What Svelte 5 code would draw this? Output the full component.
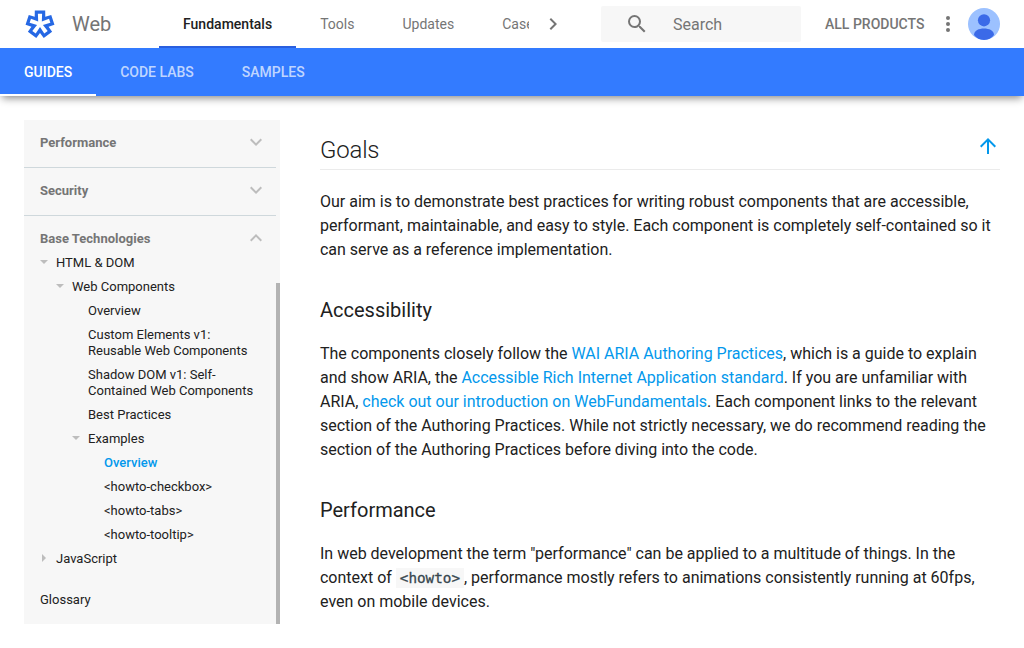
<script>
  const topTabs = ['Fundamentals', 'Tools', 'Updates', 'Case Studies'];
  const subTabs = ['GUIDES', 'CODE LABS', 'SAMPLES'];
  const tree = [
    { text: 'HTML & DOM', level: 1, arrow: 'down' },
    { text: 'Web Components', level: 2, arrow: 'down' },
    { text: 'Overview', level: 3 },
    { text: 'Custom Elements v1: Reusable Web Components', level: 3 },
    { text: 'Shadow DOM v1: Self-Contained Web Components', level: 3 },
    { text: 'Best Practices', level: 3 },
    { text: 'Examples', level: 3, arrow: 'down' },
    { text: 'Overview', level: 4, active: true },
    { text: '<howto-checkbox>', level: 4 },
    { text: '<howto-tabs>', level: 4 },
    { text: '<howto-tooltip>', level: 4 },
    { text: 'JavaScript', level: 1, arrow: 'right' }
  ];

  // Five-armed star, one arm every 72 degrees.
  function star(half, reach, notch) {
    const points = [];
    const b = (36 * Math.PI) / 180;
    for (let i = 0; i < 5; i++) {
      const a = (i * 72 * Math.PI) / 180;
      const rot = (x, y) =>
        `${(x * Math.cos(a) - y * Math.sin(a)).toFixed(2)},${(x * Math.sin(a) + y * Math.cos(a)).toFixed(2)}`;
      points.push(rot(-half, -reach), rot(half, -reach));
      points.push(rot(notch * Math.sin(b), -notch * Math.cos(b)));
    }
    return points.join(' ');
  }
</script>

<header>
  <div class="top">
    <svg class="logo" width="32" height="32" viewBox="-16 -16 32 32">
      <polygon points={star(5.2, 13.5, 9)} fill="#2668e4" />
      <polygon points={star(2.1, 10.2, 3.1)} fill="#fff" />
    </svg>
    <span class="brand">Web</span>
    <nav class="tabs">
      {#each topTabs as tab, i}
        <a class:on={i === 0}>{tab}</a>
      {/each}
    </nav>
    <svg class="next" width="24" height="24" viewBox="0 0 24 24"><path fill="#757575" d="M10 6 8.590 7.410 13.170 12l-4.580 4.590L10 18l6-6z" /></svg>
    <div class="search">
      <svg width="24" height="24" viewBox="0 0 24 24"><path fill="#757575" d="M15.500 14h-.79l-.28-.27A6.471 6.471 0 0 0 16 9.500 6.500 6.500 0 1 0 9.500 16c1.610 0 3.090-.59 4.230-1.570l.27.28v.79l5 4.990L20.490 19l-4.990-5zm-6 0C7.010 14 5 11.990 5 9.500S7.010 5 9.500 5 14 7.010 14 9.500 11.990 14 9.500 14z" /></svg>
      <span>Search</span>
    </div>
    <span class="products">ALL PRODUCTS</span>
    <svg class="more" width="24" height="24" viewBox="0 0 24 24" fill="#757575"><circle cx="12" cy="6" r="2" /><circle cx="12" cy="12" r="2" /><circle cx="12" cy="18" r="2" /></svg>
    <svg class="avatar" width="32" height="32" viewBox="0 0 32 32">
      <defs><clipPath id="disc"><circle cx="16" cy="16" r="16" /></clipPath></defs>
      <g clip-path="url(#disc)">
        <rect width="32" height="32" fill="#9cc1ff" />
        <circle cx="16" cy="12.300" r="6.100" fill="#3b6ae8" />
        <path d="M6 27c0-4.500 5-6.500 10-6.500s10 2 10 6.500c-2 3-6 5-10 5s-8-2-10-5z" fill="#3b6ae8" />
      </g>
    </svg>
  </div>
  <nav class="sub">
    {#each subTabs as tab, i}
      <a class:on={i === 0}>{tab}</a>
    {/each}
  </nav>
</header>

{#snippet chevron(up)}
  <svg class="chev" width="24" height="24" viewBox="0 0 24 24"><path fill="#bdbdbd" d={up ? 'M12 8l-6 6 1.410 1.410L12 10.830l4.590 4.580L18 14z' : 'M16.590 8.590 12 13.170 7.410 8.590 6 10l6 6 6-6z'} /></svg>
{/snippet}

<div class="page">
  <aside>
    <div class="section"><span>Performance</span>{@render chevron(false)}</div>
    <div class="section"><span>Security</span>{@render chevron(false)}</div>
    <div class="section open"><span>Base Technologies</span>{@render chevron(true)}</div>
    <ul>
      {#each tree as item}
        <li class="l{item.level}" class:active={item.active}>
          {#if item.arrow}<i class={item.arrow}></i>{/if}{item.text}
        </li>
      {/each}
    </ul>
    <div class="glossary">Glossary</div>
    <div class="thumb"></div>
  </aside>

  <main>
    <div class="title">
      <h2>Goals</h2>
      <svg width="24" height="24" viewBox="0 0 24 24"><path fill="#0398ec" d="M4 12l1.410 1.410L11 7.830V20h2V7.830l5.580 5.590L20 12l-8-8z" /></svg>
    </div>
    <p>Our aim is to demonstrate best practices for writing robust components that are accessible, performant, maintainable, and easy to style. Each component is completely self-contained so it can serve as a reference implementation.</p>
    <h3>Accessibility</h3>
    <p>The components closely follow the <a>WAI ARIA Authoring Practices</a>, which is a guide to explain and show ARIA, the <a>Accessible Rich Internet Application standard</a>. If you are unfamiliar with ARIA, <a>check out our introduction on WebFundamentals</a>. Each component links to the relevant section of the Authoring Practices. While not strictly necessary, we do recommend reading the section of the Authoring Practices before diving into the code.</p>
    <h3>Performance</h3>
    <p>In web development the term "performance" can be applied to a multitude of things. In the context of <code>&lt;howto&gt;</code>, performance mostly refers to animations consistently running at 60fps, even on mobile devices.</p>
  </main>
</div>

<style>
  :global(body) { margin: 0; background: #fff; overflow: hidden; }
  :global(#app) { font-family: Roboto, sans-serif; color: #212121; }
  svg { display: block; flex: none; }
  header { position: relative; box-shadow: 0 4px 8px -2px rgba(0, 0, 0, .48); }
  .top { display: flex; align-items: center; height: 48px; background: #fff; padding-left: 24px; }
  .brand { width: 87px; margin-left: 16px; font-size: 20px; line-height: 32px; color: #757575; }
  .tabs { display: flex; width: 370px; height: 48px; overflow: hidden; }
  .tabs a { box-sizing: border-box; flex: none; height: 48px; padding: 0 24px; font-size: 14px; line-height: 48px; color: #757575; letter-spacing: .01px; }
  .tabs a.on { border-bottom: 2px solid #2a5fdf; color: #212121; font-weight: 500; }
  .next { margin-left: 12px; }
  .search { display: flex; align-items: center; box-sizing: border-box; width: 200px; height: 36px; margin-left: 36px; padding-left: 24px; gap: 24px; border-radius: 2px; background: #f7f7f7; color: #757575; font-size: 16px; }
  .products { width: 111px; margin-left: 24px; color: #757575; font-size: 14px; font-weight: 500; white-space: nowrap; }
  .avatar { margin-left: 8px; }
  .sub { display: flex; height: 48px; background: #337bff; }
  .sub a { box-sizing: border-box; height: 48px; padding: 0 24px; color: rgba(255, 255, 255, .7); font-size: 14px; font-weight: 500; line-height: 48px; }
  .sub .on { color: #fff; border-bottom: 2px solid #fff; }
  .page { display: flex; gap: 40px; padding: 24px 24px 0; }
  aside { position: relative; flex: none; width: 256px; height: 504px; background: #f7f7f7; font-size: 13px; line-height: 16px; }
  .section { display: flex; justify-content: space-between; align-items: center; box-sizing: border-box; width: 252px; height: 48px; padding: 0 8px 3px 16px; border-bottom: 1px solid #cfd8dc; color: #757575; font-weight: 700; }
  .section span { padding-top: 2px; }
  .section.open { height: 39px; padding-top: 6px; padding-bottom: 1px; border: 0; }
  ul { list-style: none; margin: 0; padding: 0; }
  li { position: relative; padding-bottom: 8px; padding-right: 24px; }
  .l1 { padding-left: 32px; }
  .l2 { padding-left: 48px; }
  .l3 { padding-left: 64px; }
  .l4 { padding-left: 80px; }
  .active { color: #0398ec; font-weight: 500; }
  li i { position: absolute; top: 5px; margin-left: -16px; border: 4px solid transparent; border-top-color: #bdbdbd; border-bottom: 0; }
  li i.right { top: 3px; margin-left: -14px; border: 4px solid transparent; border-left-color: #bdbdbd; border-right: 0; }
  .glossary { padding: 17px 16px 0; }
  .thumb { position: absolute; right: 0; top: 163px; width: 4px; height: 341px; background: #b3b3b3; }
  main { width: 680px; }
  .title { display: flex; justify-content: space-between; box-sizing: border-box; height: 50px; border-bottom: 1px solid #ebebeb; padding-top: 14px; }
  h2 { margin: 0; font-size: 24px; font-weight: 300; line-height: 32px; letter-spacing: -.2px; }
  h3 { margin: 32px 0 0; font-size: 20px; font-weight: 400; line-height: 32px; }
  p { margin: 16px 0 0; font-size: 16px; line-height: 24px; letter-spacing: -.007px; }
  .title + p { margin-top: 20px; }
  p a { color: #0398ec; }
  code { padding: 2px 4px; background: #f7f7f7; color: #37474f; font: 14.3px/1 "DejaVu Sans Mono", monospace; -webkit-text-stroke: .3px #37474f; }
</style>
